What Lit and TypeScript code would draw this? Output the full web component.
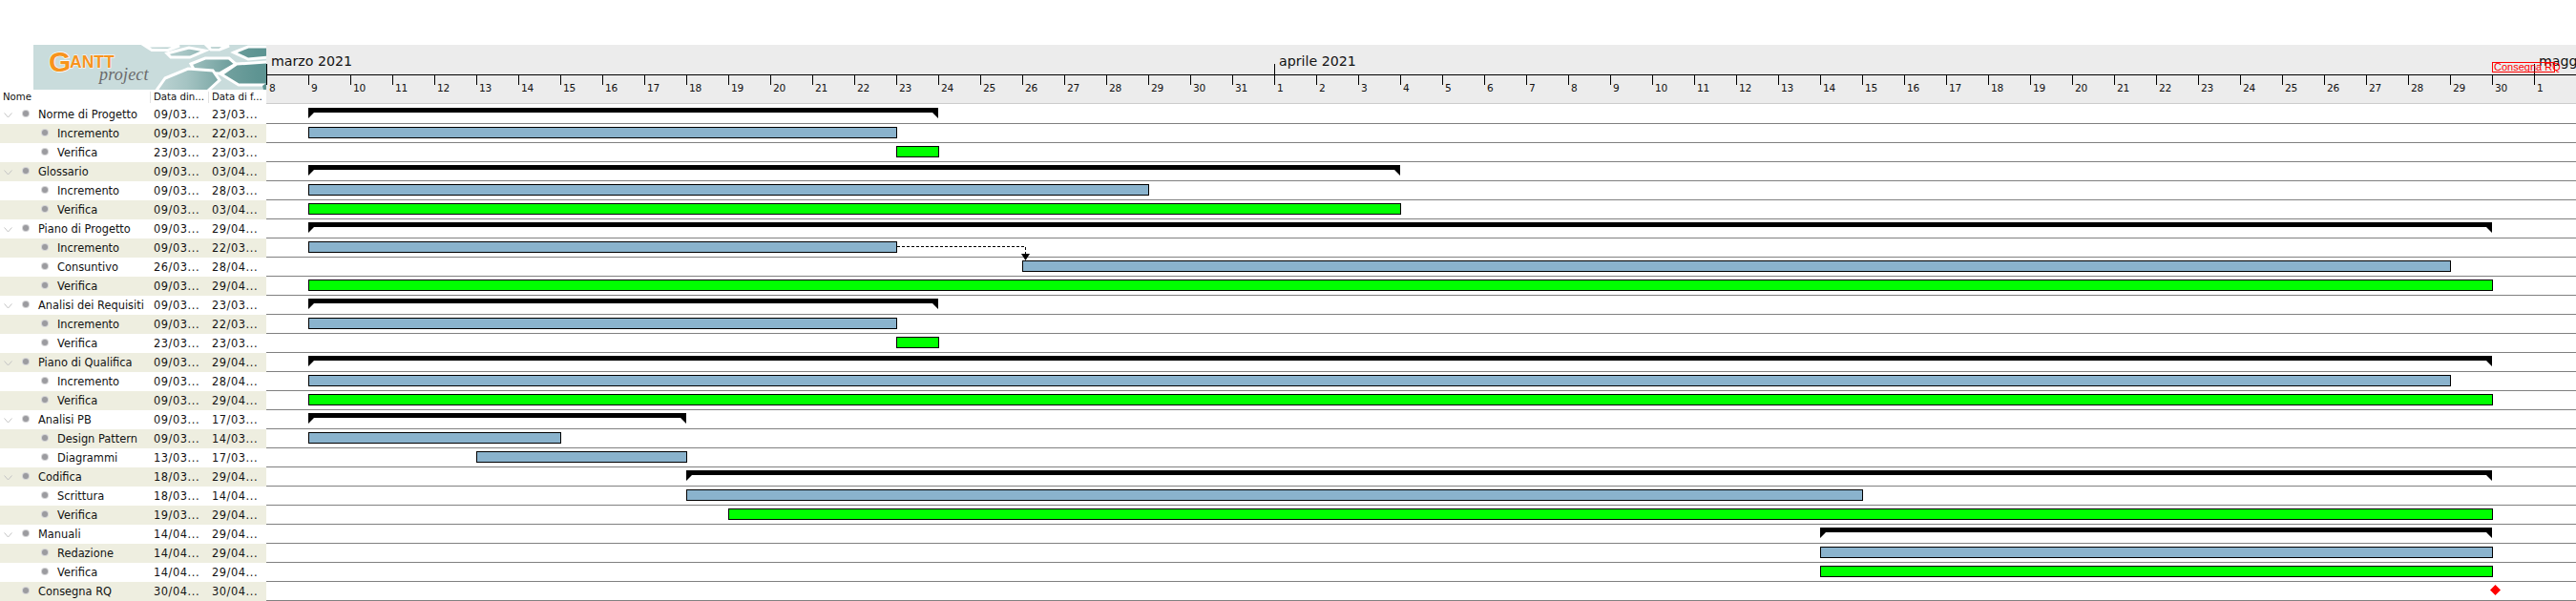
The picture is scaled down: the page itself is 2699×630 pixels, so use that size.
import { LitElement, html, css, svg } from "lit";
import { customElement } from "lit/decorators.js";

const DAY = 44;
type Kind = "sum" | "task" | "ver" | "mile";
interface Row { name: string; d: 0 | 1; open?: boolean; s: string; e: string; kind: Kind; from: number; to: number; }

const rows: Row[] = [
  { name: "Norme di Progetto", d: 0, open: true, s: "09/03...", e: "23/03...", kind: "sum", from: 1, to: 16 },
  { name: "Incremento", d: 1, s: "09/03...", e: "22/03...", kind: "task", from: 1, to: 15 },
  { name: "Verifica", d: 1, s: "23/03...", e: "23/03...", kind: "ver", from: 15, to: 16 },
  { name: "Glossario", d: 0, open: true, s: "09/03...", e: "03/04...", kind: "sum", from: 1, to: 27 },
  { name: "Incremento", d: 1, s: "09/03...", e: "28/03...", kind: "task", from: 1, to: 21 },
  { name: "Verifica", d: 1, s: "09/03...", e: "03/04...", kind: "ver", from: 1, to: 27 },
  { name: "Piano di Progetto", d: 0, open: true, s: "09/03...", e: "29/04...", kind: "sum", from: 1, to: 53 },
  { name: "Incremento", d: 1, s: "09/03...", e: "22/03...", kind: "task", from: 1, to: 15 },
  { name: "Consuntivo", d: 1, s: "26/03...", e: "28/04...", kind: "task", from: 18, to: 52 },
  { name: "Verifica", d: 1, s: "09/03...", e: "29/04...", kind: "ver", from: 1, to: 53 },
  { name: "Analisi dei Requisiti", d: 0, open: true, s: "09/03...", e: "23/03...", kind: "sum", from: 1, to: 16 },
  { name: "Incremento", d: 1, s: "09/03...", e: "22/03...", kind: "task", from: 1, to: 15 },
  { name: "Verifica", d: 1, s: "23/03...", e: "23/03...", kind: "ver", from: 15, to: 16 },
  { name: "Piano di Qualifica", d: 0, open: true, s: "09/03...", e: "29/04...", kind: "sum", from: 1, to: 53 },
  { name: "Incremento", d: 1, s: "09/03...", e: "28/04...", kind: "task", from: 1, to: 52 },
  { name: "Verifica", d: 1, s: "09/03...", e: "29/04...", kind: "ver", from: 1, to: 53 },
  { name: "Analisi PB", d: 0, open: true, s: "09/03...", e: "17/03...", kind: "sum", from: 1, to: 10 },
  { name: "Design Pattern", d: 1, s: "09/03...", e: "14/03...", kind: "task", from: 1, to: 7 },
  { name: "Diagrammi", d: 1, s: "13/03...", e: "17/03...", kind: "task", from: 5, to: 10 },
  { name: "Codifica", d: 0, open: true, s: "18/03...", e: "29/04...", kind: "sum", from: 10, to: 53 },
  { name: "Scrittura", d: 1, s: "18/03...", e: "14/04...", kind: "task", from: 10, to: 38 },
  { name: "Verifica", d: 1, s: "19/03...", e: "29/04...", kind: "ver", from: 11, to: 53 },
  { name: "Manuali", d: 0, open: true, s: "14/04...", e: "29/04...", kind: "sum", from: 37, to: 53 },
  { name: "Redazione", d: 1, s: "14/04...", e: "29/04...", kind: "task", from: 37, to: 53 },
  { name: "Verifica", d: 1, s: "14/04...", e: "29/04...", kind: "ver", from: 37, to: 53 },
  { name: "Consegna RQ", d: 0, s: "30/04...", e: "30/04...", kind: "mile", from: 53, to: 53 },
];

const months = [
  { label: "marzo 2021", days: 24 },
  { label: "aprile 2021", days: 30 },
  { label: "maggio 2021", days: 2 },
];

const dayLabels: number[] = [];
for (let d = 8; d <= 31; d++) dayLabels.push(d);
for (let d = 1; d <= 30; d++) dayLabels.push(d);
dayLabels.push(1, 2);

const hexes = [
  "117,1 153,1 141,5.5 124,5.5",
  "140,9 163,3 180,6 164,13 144,13",
  "182,1 205,1 195,5 186,5",
  "165,20 180,14 205,14 212,20 195,30 170,29",
  "210,8 225,2 246,2 246,13 225,15",
  "197,31 213,20 246,18 246,42 215,42",
  "138,35 162,25 188,27 195,37 182,49 128,49",
];

@customElement("app-root")
export class AppRoot extends LitElement {
  static styles = css`
    :host {
      display: block;
      width: 2699px;
      height: 630px;
      overflow: hidden;
      padding-top: 47px;
      box-sizing: border-box;
      background: #fff;
      font-family: "DejaVu Sans", "Noto Sans", sans-serif;
      color: #111;
    }
    .gantt { display: flex; align-items: flex-start; }

    /* left table */
    .table { flex: 0 0 279px; width: 279px; }
    .logo { display: block; width: 244px; height: 47px; margin-left: 35px; }
    .cols {
      display: grid;
      grid-template-columns: 157px 61px 61px;
      height: 16px;
      align-items: center;
      font-size: 10.2px;
    }
    .cols span { padding-left: 3px; line-height: 12px; white-space: nowrap; overflow: hidden; border-left: 1px solid #e2e2e2; }
    .cols span:first-child { border-left: 0; }
    .row {
      display: grid;
      grid-template-columns: 161px 61px 57px;
      height: 20px;
      align-items: center;
      font-size: 11.4px;
    }
    .row.alt { background: #eeeee0; }
    .name { display: flex; align-items: center; white-space: nowrap; }
    .name.d1 { padding-left: 20px; }
    .slot { flex: 0 0 24px; height: 20px; display: flex; align-items: center; padding-left: 4px; box-sizing: border-box; }
    .chev { display: block; width: 9px; height: 6px; margin-top: 1px; }
    .dot {
      flex: 0 0 6px; height: 6px; border-radius: 50%;
      background: #9b9b9f; box-shadow: 0 0 0 1px #d4d4d6; margin: -2px 10px 0 0;
    }
    .date { letter-spacing: 0.55px; white-space: nowrap; }

    /* chart */
    .chart { flex: 1 1 auto; min-width: 0; overflow: hidden; position: relative; }
    .head { height: 62px; background: #ececec; border-bottom: 1px solid #cccccc; box-sizing: border-box; overflow: hidden; position: relative; }
    .months { display: flex; height: 31px; }
    .month { flex: none; position: relative; font-size: 14.2px; padding: 7px 0 0 5px; box-sizing: border-box; white-space: nowrap; line-height: 20px; }
    .month::before { content: ""; position: absolute; left: 0; bottom: 0; height: 11px; width: 1px; background: #000; }
    .days { display: flex; border-top: 1px solid #000; height: 30px; box-sizing: border-box; }
    .day { flex: 0 0 44px; position: relative; font-size: 10.6px; padding: 4px 0 0 3px; box-sizing: border-box; line-height: 18px; letter-spacing: -0.2px; }
    .day::before { content: ""; position: absolute; left: 0; top: 0; height: 10px; width: 1px; background: #000; }
    .note {
      position: absolute; left: 2332px; top: 18px; width: 66px; height: 11px; box-sizing: border-box;
      border: 1px solid #f00; color: #f00; font-family: "Liberation Sans", sans-serif; font-size: 11px; line-height: 9px;
      white-space: nowrap; padding-left: 1px;
    }
    .rows { padding-top: 1px; }
    .lane { height: 20px; padding-top: 3px; box-sizing: border-box; border-bottom: 1px solid #808080; }
    .bar { height: 12px; box-sizing: border-box; border: 1px solid #000; }
    .bar.task { background: #8ab3cd; }
    .bar.ver { background: #00ff00; }
    .bar.sum {
      height: 11px; border: 0; background: #000;
      clip-path: polygon(0 0, 100% 0, 100% 100%, calc(100% - 6px) 5px, 6px 5px, 0 100%);
    }
    .bar.mile {
      width: 11px; height: 11px; border: 0; background: #f00;
      clip-path: polygon(50% 0, 100% 50%, 50% 100%, 0 50%);
    }
    .links { position: absolute; left: 0; top: 0; width: 2420px; height: 583px; pointer-events: none; }
    .brand { paint-order: stroke; font-family: "Liberation Sans", sans-serif; font-weight: 700; fill: #f7941d; stroke: #fff; }
    .brand-g { font-size: 30px; stroke-width: 1.4px; }
    .brand-t { font-size: 17.5px; stroke-width: 1px; }
    .brand-p { font-family: "Liberation Serif", serif; font-style: italic; font-size: 18px; fill: #6b6b6b; letter-spacing: 0.2px; }
  `;

  private bar(r: Row) {
    if (r.kind === "mile") {
      return html`<div class="bar mile" style="margin-left:${r.from * DAY - 2}px"></div>`;
    }
    const extra = r.kind === "sum" ? 0 : 1;
    return html`<div class="bar ${r.kind}" style="margin-left:${r.from * DAY}px;width:${(r.to - r.from) * DAY + extra}px"></div>`;
  }

  private logo() {
    return html`<svg class="logo" viewBox="0 0 244 47" aria-label="GanttProject">
      <defs>
        <linearGradient id="tile" gradientUnits="userSpaceOnUse" x1="120" y1="0" x2="235" y2="0">
          <stop offset="0" stop-color="#c6d9d9" />
          <stop offset="0.35" stop-color="#a5c4c3" />
          <stop offset="0.75" stop-color="#6f9f9d" />
          <stop offset="1" stop-color="#5e9492" />
        </linearGradient>
      </defs>
      <rect width="244" height="47" fill="#c9dcdc" />
      ${hexes.map((p) => svg`<polygon points=${p} fill="url(#tile)" stroke="#fff" stroke-width="3" />`)}
      <polygon points="240,43 244,40 244,47 241,47" fill="#5e9492" />
      <text class="brand brand-g" x="16" y="28">G</text>
      <text class="brand brand-t" x="38" y="23.5">ANTT</text>
      <text class="brand-p" x="69" y="37">project</text>
    </svg>`;
  }

  render() {
    return html`<div class="gantt">
      <div class="table">
        ${this.logo()}
        <div class="cols"><span>Nome</span><span>Data din...</span><span>Data di f...</span></div>
        ${rows.map(
          (r, i) => html`<div class="row ${i % 2 ? "alt" : ""}">
            <div class="name d${r.d}">
              <span class="slot">${r.open
                ? html`<svg class="chev" viewBox="0 0 9 6"><polyline points="0.5,0.5 4.5,5 8.5,0.5" fill="none" stroke="#c4c4c4" stroke-width="1" /></svg>`
                : ""}</span>
              <span class="dot"></span><span>${r.name}</span>
            </div>
            <div class="date">${r.s}</div>
            <div class="date">${r.e}</div>
          </div>`
        )}
      </div>
      <div class="chart">
        <div class="head">
          <div class="months">
            ${months.map((m) => html`<div class="month" style="width:${m.days * DAY}px">${m.label}</div>`)}
          </div>
          <div class="days">${dayLabels.map((d) => html`<div class="day">${d}</div>`)}</div>
          <div class="note">Consegna RQ</div>
        </div>
        <div class="rows">
          ${rows.map((r) => html`<div class="lane">${this.bar(r)}</div>`)}
        </div>
        <svg class="links" viewBox="0 0 2420 583">
          <polyline points="661,211.5 795.5,211.5 795.5,219" fill="none" stroke="#000" stroke-width="1" stroke-dasharray="3 2" />
          <polygon points="791,219 800,219 795.5,226" fill="#000" />
        </svg>
      </div>
    </div>`;
  }
}
